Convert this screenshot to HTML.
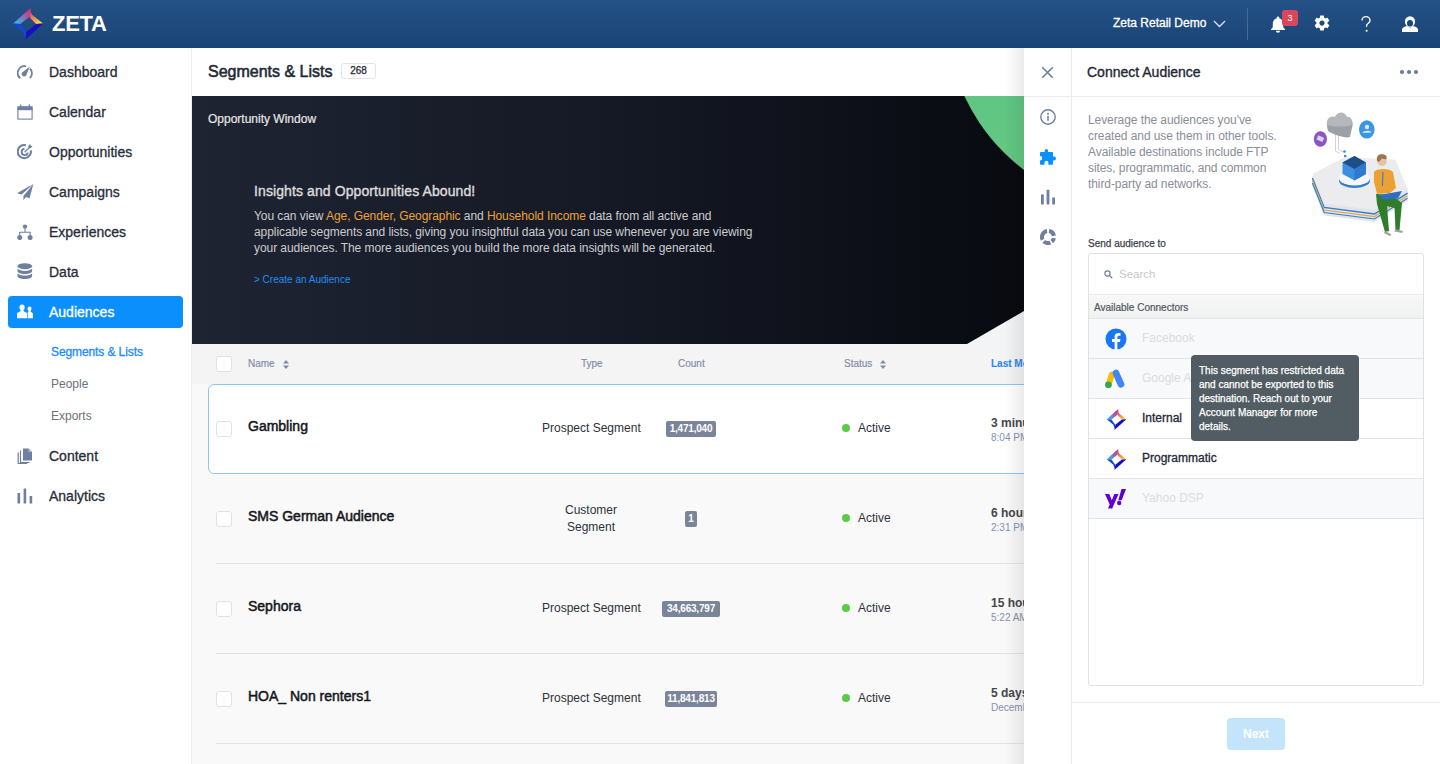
<!DOCTYPE html>
<html><head><meta charset="utf-8">
<style>
*{box-sizing:border-box;margin:0;padding:0}
html,body{width:1440px;height:764px;overflow:hidden;font-family:"Liberation Sans",sans-serif;background:#fff;position:relative}
.a{position:absolute;white-space:nowrap}
#top{left:0;top:0;width:1440px;height:48px;background:linear-gradient(#245186,#1a4477)}
#side{left:0;top:48px;width:192px;height:716px;background:#fff;border-right:1px solid #eceef1}
.nv{position:absolute;left:8px;width:175px;height:32px;border-radius:4px}
.nv span{position:absolute;left:41px;top:8px;font-size:14px;line-height:16px;color:#272d3b;-webkit-text-stroke:0.3px #272d3b}
.nv svg{position:absolute;left:9px;top:8px}
.nv.act{background:#0a8ffc}
.nv.act span{color:#fff;-webkit-text-stroke:0.3px #fff}
.sub{position:absolute;left:51px;font-size:12px;line-height:14px;color:#6b7079}
#main{left:192px;top:48px;width:832px;height:716px;background:#f9f9f9}
.cb{position:absolute;left:216px;width:16px;height:16px;border:1px solid #dfe1e4;border-radius:3px;background:#fff}
.th{position:absolute;top:358px;font-size:10px;line-height:12px;color:#7d8aa8;-webkit-text-stroke:0.15px #7d8aa8;white-space:nowrap}
.rn{position:absolute;left:248px;font-size:14px;line-height:16px;color:#15171c;-webkit-text-stroke:0.5px #15171c;white-space:nowrap}
.ty{position:absolute;left:542px;font-size:12px;line-height:14px;color:#2e323a;white-space:nowrap}
.bd{position:absolute;height:16px;border-radius:2px;background:#7a8599;color:#fff;font-size:10px;line-height:16px;font-weight:700;text-align:center;letter-spacing:-0.2px}
.dot{position:absolute;left:842px;width:8px;height:8px;border-radius:50%;background:#5acb44}
.st{position:absolute;left:858px;font-size:12px;line-height:14px;color:#2e323a;white-space:nowrap}
.lm{position:absolute;margin-top:-2px;left:991px;font-size:12px;line-height:14px;font-weight:700;color:#45474c;white-space:nowrap}
.lt{position:absolute;left:991px;font-size:10px;line-height:12px;color:#8491ad;white-space:nowrap}
.cr{position:absolute;left:0;width:336px;height:40px;border-top:1px solid #e3e4e6}
.cn{position:absolute;left:53px;font-size:12px;line-height:14px;white-space:nowrap}
#rp{left:1024px;top:48px;width:416px;height:716px;background:#fff}
</style></head><body>
<!-- TOP BAR -->
<div id="top" class="a">
  <svg width="0" height="0" style="position:absolute"><defs>
      <linearGradient id="lg1" x1="13" y1="23" x2="30" y2="8" gradientUnits="userSpaceOnUse"><stop offset="0" stop-color="#23c4f5"/><stop offset="1" stop-color="#e8207a"/></linearGradient>
      <linearGradient id="lg2" x1="30" y1="8" x2="43" y2="23" gradientUnits="userSpaceOnUse"><stop offset="0" stop-color="#e8207a"/><stop offset="1" stop-color="#f8ec3a"/></linearGradient>
      <g id="zlogo">
    <path d="M13.2 23.6 L30.4 8 L29.9 16.4 L20.2 23.9Z" fill="url(#lg1)"/>
    <path d="M30.4 8 Q30.8 13 32 14.8 L43.1 23.6 L36.1 23.9 L30.6 18.6 L29.9 16.4Z" fill="url(#lg2)"/>
    <path d="M43.1 23.6 L25.2 39.8 L26.2 32.1 L36.1 23.9Z" fill="#1a0fbf"/>
    <path d="M13.2 23.6 L20.2 23.9 L26.2 32.1 L25.2 39.8 Q24.6 35 23.2 32Z" fill="#1447d6"/>
      </g></defs></svg>
  <svg class="a" style="left:0;top:0" width="50" height="48" viewBox="0 0 50 48"><use href="#zlogo"/></svg>
  <div class="a" style="left:52px;top:12px;font-size:22px;line-height:24px;font-weight:700;color:#fff;letter-spacing:-0.3px">ZETA</div>
  <div class="a" style="left:1113px;top:16px;font-size:12px;line-height:15px;color:#fff;-webkit-text-stroke:0.3px #fff">Zeta Retail Demo</div>
  <svg class="a" style="left:1213px;top:20px" width="13" height="8" viewBox="0 0 13 8"><path d="M1 1 L6.5 6.5 L12 1" fill="none" stroke="#dfe6f0" stroke-width="1.3"/></svg>
  <div class="a" style="left:1247px;top:8px;width:1px;height:32px;background:#4a6a96"></div>
  <!-- bell -->
  <svg class="a" style="left:1269px;top:15px" width="18" height="18" viewBox="0 0 18 18"><path d="M9 1.5c-.8 0-1.3.6-1.3 1.3v.5C5.3 3.9 3.8 6 3.8 8.6v3.6L2 14.2v.9h14v-.9l-1.8-2V8.6c0-2.6-1.5-4.7-3.9-5.3v-.5c0-.7-.5-1.3-1.3-1.3z M7 15.8a2 2 0 0 0 4 0z" fill="#fff"/></svg>
  <div class="a" style="left:1282px;top:10px;width:16px;height:16px;border-radius:3px;background:#d9475c;color:#fff;font-size:9px;line-height:16px;text-align:center">3</div>
  <!-- gear -->
  <svg class="a" style="left:1313px;top:14px" width="18" height="18" viewBox="0 0 24 24"><path fill="#fff" d="M19.4 13c.04-.33.06-.66.06-1s-.02-.67-.06-1l2.1-1.65c.2-.15.24-.42.12-.64l-2-3.46c-.12-.22-.39-.3-.61-.22l-2.49 1c-.52-.4-1.08-.73-1.69-.98l-.38-2.65C14.46 2.18 14.25 2 14 2h-4c-.25 0-.46.18-.49.42l-.38 2.65c-.61.25-1.17.59-1.69.98l-2.49-1c-.23-.09-.49 0-.61.22l-2 3.46c-.13.22-.07.49.12.64L4.57 11c-.04.33-.07.66-.07 1s.03.67.07 1l-2.11 1.65c-.19.15-.24.42-.12.64l2 3.46c.12.22.39.3.61.22l2.49-1c.52.4 1.08.73 1.69.98l.38 2.65c.03.24.24.42.49.42h4c.25 0 .46-.18.49-.42l.38-2.65c.61-.25 1.17-.59 1.69-.98l2.49 1c.23.09.49 0 .61-.22l2-3.46c.12-.22.07-.49-.12-.64L19.4 13zM12 15.5c-1.93 0-3.5-1.57-3.5-3.5s1.57-3.5 3.5-3.5 3.5 1.57 3.5 3.5-1.57 3.5-3.5 3.5z"/></svg>
  <!-- help -->
  <svg class="a" style="left:1358px;top:15px" width="16" height="18" viewBox="0 0 16 18"><path d="M4 5.5C4 3.3 5.8 1.6 8 1.6s4 1.7 4 3.8c0 1.6-1 2.4-2 3.1-.9.6-1.4 1.1-1.4 2.3v1" fill="none" stroke="#fff" stroke-width="1.4"/><circle cx="8.6" cy="15.8" r="1" fill="#fff"/></svg>
  <!-- user -->
  <svg class="a" style="left:1401px;top:15px" width="18" height="18" viewBox="0 0 18 18"><ellipse cx="9" cy="6.6" rx="5.1" ry="5.4" fill="#fff"/><ellipse cx="9" cy="8.2" rx="3" ry="3.3" fill="#1c4879"/><path d="M1 17V14.6C1 12.6 3.6 11.4 6.2 11 7 11.9 8 12.3 9 12.3S11 11.9 11.8 11C14.4 11.4 17 12.6 17 14.6V17Z" fill="#fff"/></svg>
</div>
<!-- SIDEBAR -->
<div id="side" class="a"></div>
<div class="nv" style="top:56px"><svg style="left:9px;top:9px" width="16" height="14" viewBox="0 0 16 14"><path d="M3.2 13.2A6.8 6.8 0 0 1 9.2 1.4M13 3.5a6.8 6.8 0 0 1-.2 9.7" fill="none" stroke="#6f7fa0" stroke-width="1.8"/><path d="M12.8 1.6 L9.3 10.3 A2.5 2.5 0 1 1 5.2 7.4Z" fill="#6f7fa0"/></svg><span>Dashboard</span></div>
<div class="nv" style="top:96px"><svg style="left:9px;top:8px" width="16" height="16" viewBox="0 0 16 16"><rect x="0.9" y="4" width="14.2" height="11.1" fill="none" stroke="#6f7fa0" stroke-width="1.1"/><rect x="0.4" y="2.2" width="15.2" height="4" fill="#6f7fa0"/><rect x="3" y="0.5" width="1.3" height="2.5" fill="#6f7fa0"/><rect x="11.7" y="0.5" width="1.3" height="2.5" fill="#6f7fa0"/></svg><span>Calendar</span></div>
<div class="nv" style="top:136px"><svg style="left:9px;top:7px" width="16" height="17" viewBox="0 0 16 17"><path d="M13.8 7.4A6.6 6.6 0 1 1 8.9 2.2" fill="none" stroke="#6f7fa0" stroke-width="2.1"/><path d="M10.8 9.6A3.1 3.1 0 1 1 7.6 5.9" fill="none" stroke="#6f7fa0" stroke-width="1.9"/><path d="M7.6 9.3 L13.5 3.4" stroke="#6f7fa0" stroke-width="1.3"/><path d="M11.3 3 L13.2 0.8 L13.6 2.8 L15.6 3.2 L13.6 5.3 L11.6 5Z" fill="#6f7fa0"/></svg><span>Opportunities</span></div>
<div class="nv" style="top:176px"><svg style="left:9px;top:8px" width="17" height="17" viewBox="0 0 17 17"><path d="M16.4 0 L0 9.2 L4.6 10.5 L16.4 0 L6.4 12 L6.4 16.2 L9 12.9 L12.5 14.2Z" fill="#6f7fa0"/></svg><span>Campaigns</span></div>
<div class="nv" style="top:216px"><svg style="left:9px;top:8px" width="16" height="16" viewBox="0 0 16 16"><circle cx="8" cy="2.6" r="2.2" fill="#6f7fa0"/><circle cx="2.7" cy="13.6" r="2.5" fill="#6f7fa0"/><circle cx="13.1" cy="13.6" r="2.5" fill="#6f7fa0"/><path d="M8 4.5V8M2.7 11V8.2H13.1V11" fill="none" stroke="#6f7fa0" stroke-width="1.1"/></svg><span>Experiences</span></div>
<div class="nv" style="top:256px"><svg style="left:9px;top:7px" width="16" height="17" viewBox="0 0 16 17"><ellipse cx="7.8" cy="3.2" rx="7.3" ry="3" fill="#6f7fa0"/><path d="M0.5 5.5v2.6c0 1.7 3.3 3 7.3 3s7.3-1.3 7.3-3V5.5c-1 1.5-4 2.4-7.3 2.4S1.5 7 .5 5.5z" fill="#6f7fa0"/><path d="M0.5 10.2v2.8c0 1.7 3.3 3 7.3 3s7.3-1.3 7.3-3v-2.8c-1 1.5-4 2.4-7.3 2.4S1.5 11.7.5 10.2z" fill="#6f7fa0"/></svg><span>Data</span></div>
<div class="nv act" style="top:296px"><svg style="left:9px;top:8px" width="17" height="15" viewBox="0 0 17 15"><path d="M5 0.6c-1.6 0-2.6 1.2-2.6 2.8 0 1.1.4 2 1.1 2.6v1.2L0.1 8.9V14.3H10.2V8.9L6.6 7.2V6c.7-.6 1.1-1.5 1.1-2.6C7.7 1.8 6.6.6 5 .6z" fill="#fff"/><path d="M12.6 2.6c-1.2 0-2 .9-2 2.2 0 .8.3 1.5.8 2v.9l-.6.3 0 6.3H15.9V9.2L13.7 7.8v-1c.5-.5.8-1.2.8-2 0-1.3-.8-2.2-1.9-2.2z" fill="#fff"/></svg><span>Audiences</span></div>
<div class="sub" style="top:345px;color:#1a8cff;-webkit-text-stroke:0.3px #1a8cff;letter-spacing:-0.1px">Segments &amp; Lists</div>
<div class="sub" style="top:377px">People</div>
<div class="sub" style="top:409px">Exports</div>
<div class="nv" style="top:440px"><svg style="left:9px;top:8px" width="16" height="16" viewBox="0 0 16 16"><path d="M6 0.5h5.5L15 4v8.5H6z" fill="#6f7fa0"/><path d="M11.5 0.5V4H15" fill="#a9b5cb"/><path d="M3.5 2.5v12h9" fill="none" stroke="#6f7fa0" stroke-width="1.2"/><path d="M1.2 4.5v11h9" fill="none" stroke="#6f7fa0" stroke-width="1.2"/></svg><span>Content</span></div>
<div class="nv" style="top:480px"><svg style="left:9px;top:8px" width="16" height="16" viewBox="0 0 16 16"><rect x="0.5" y="5" width="2.6" height="10.5" fill="#6f7fa0"/><rect x="6.6" y="0.5" width="2.6" height="15" fill="#6f7fa0"/><rect x="12.6" y="8" width="2.6" height="7.5" fill="#6f7fa0"/></svg><span>Analytics</span></div>
<!-- MAIN -->
<div id="main" class="a"></div>
<div class="a" style="left:192px;top:48px;width:832px;height:48px;background:#fff"></div>
<div class="a" style="left:208px;top:62.5px;font-size:16px;line-height:18px;color:#232936;-webkit-text-stroke:0.55px #232936">Segments &amp; Lists</div>
<div class="a" style="left:341px;top:63px;width:35px;height:16px;border:1px solid #e3e4e7;border-radius:3px;background:#fff;font-size:10px;line-height:14px;text-align:center;color:#2a2f3a;-webkit-text-stroke:0.3px #2a2f3a">268</div>
<!-- banner -->
<div class="a" style="left:192px;top:96px;width:832px;height:248px;overflow:hidden;background:linear-gradient(90deg,#1f2433 0%,#151925 50%,#080a10 100%)">
  <div class="a" style="left:754px;top:-280px;width:394px;height:394px;border-radius:50%;background:linear-gradient(160deg,#52c093,#6acb78)"></div>
  <svg class="a" style="left:0;top:0" width="832" height="248"><path d="M775 248 L832 215 L832 248Z" fill="#f2f4f6"/></svg>
  <div class="a" style="left:16px;top:16px;font-size:12px;line-height:14px;color:#e6e6e6;-webkit-text-stroke:0.2px #e6e6e6">Opportunity Window</div>
  <div class="a" style="left:62px;top:87px;font-size:14px;line-height:16px;color:#d9dadb;-webkit-text-stroke:0.4px #d9dadb;letter-spacing:0.1px">Insights and Opportunities Abound!</div>
  <div class="a" style="left:62px;top:112px;font-size:12px;line-height:16px;color:#cbccce;letter-spacing:-0.07px">You can view <span style="color:#eba23a">Age, Gender, Geographic</span> and <span style="color:#eba23a">Household Income</span> data from all active and<br>applicable segments and lists, giving you insightful data you can use whenever you are viewing<br>your audiences. The more audiences you build the more data insights will be generated.</div>
  <div class="a" style="left:62px;top:178px;font-size:10px;line-height:12px;color:#1c8ef5">&gt; Create an Audience</div>
</div>
<!-- table header -->
<div class="a" style="left:192px;top:344px;width:832px;height:40px;background:#f4f4f4"></div>
<div class="cb" style="top:356px"></div>
<div class="th" style="left:248px">Name</div>
<svg class="a" style="left:283px;top:360px" width="6" height="9" viewBox="0 0 6 9"><path d="M0 3.6L3 0 6 3.6zM0 5.4L3 9 6 5.4z" fill="#7d8aa8"/></svg>
<div class="th" style="left:581px">Type</div>
<div class="th" style="left:678px">Count</div>
<div class="th" style="left:844px">Status</div>
<svg class="a" style="left:880px;top:360px" width="6" height="9" viewBox="0 0 6 9"><path d="M0 3.6L3 0 6 3.6zM0 5.4L3 9 6 5.4z" fill="#7d8aa8"/></svg>
<div class="th" style="left:991px;color:#1a8cff;font-weight:700">Last Modified</div>
<!-- rows -->
<div class="a" style="left:208px;top:384px;width:840px;height:90px;background:#fff;border:1px solid #8fc5f4;border-radius:6px"></div>
<div class="cb" style="top:421px"></div>
<div class="rn" style="top:418px">Gambling</div>
<div class="ty" style="top:421px">Prospect Segment</div>
<div class="bd" style="left:666px;top:421px;width:50px">1,471,040</div>
<div class="dot" style="top:424px"></div><div class="st" style="top:421px">Active</div>
<div class="lm" style="top:418px">3 minutes ago</div><div class="lt" style="top:432px">8:04 PM</div>

<div class="cb" style="top:511px"></div>
<div class="rn" style="top:508px">SMS German Audience</div>
<div class="ty" style="top:502px;line-height:17px;text-align:center;width:60px;left:561px">Customer<br>Segment</div>
<div class="bd" style="left:685px;top:511px;width:12px">1</div>
<div class="dot" style="top:514px"></div><div class="st" style="top:511px">Active</div>
<div class="lm" style="top:508px">6 hours ago</div><div class="lt" style="top:522px">2:31 PM</div>
<div class="a" style="left:216px;top:563px;width:820px;height:1px;background:#e4e4e4"></div>

<div class="cb" style="top:601px"></div>
<div class="rn" style="top:598px">Sephora</div>
<div class="ty" style="top:601px">Prospect Segment</div>
<div class="bd" style="left:662px;top:601px;width:58px">34,663,797</div>
<div class="dot" style="top:604px"></div><div class="st" style="top:601px">Active</div>
<div class="lm" style="top:598px">15 hours ago</div><div class="lt" style="top:612px">5:22 AM</div>
<div class="a" style="left:216px;top:653px;width:820px;height:1px;background:#e4e4e4"></div>

<div class="cb" style="top:691px"></div>
<div class="rn" style="top:688px">HOA_ Non renters1</div>
<div class="ty" style="top:691px">Prospect Segment</div>
<div class="bd" style="left:665px;top:691px;width:52px">11,841,813</div>
<div class="dot" style="top:694px"></div><div class="st" style="top:691px">Active</div>
<div class="lm" style="top:688px">5 days ago</div><div class="lt" style="top:702px">December</div>
<div class="a" style="left:216px;top:743px;width:820px;height:1px;background:#e4e4e4"></div>
<!-- panel shadow -->
<div class="a" style="left:1004px;top:48px;width:20px;height:716px;background:linear-gradient(90deg,rgba(0,0,0,0),rgba(0,0,0,0.08))"></div>
<!-- RIGHT PANEL -->
<div id="rp" class="a"></div>
<div class="a" style="left:1071px;top:48px;width:1px;height:716px;background:#e8ebef"></div>
<div class="a" style="left:1024px;top:96px;width:416px;height:1px;background:#e8ebef"></div>
<svg class="a" style="left:1041px;top:66px" width="13" height="13" viewBox="0 0 13 13"><path d="M1.2 1.2L11.8 11.8M11.8 1.2L1.2 11.8" stroke="#6a7a9a" stroke-width="1.5"/></svg>
<div class="a" style="left:1087px;top:64px;font-size:14px;line-height:16px;color:#232936;-webkit-text-stroke:0.35px #232936">Connect Audience</div>
<svg class="a" style="left:1399px;top:69px" width="20" height="6" viewBox="0 0 20 6"><circle cx="3" cy="3" r="2.1" fill="#6a7a9a"/><circle cx="10" cy="3" r="2.1" fill="#6a7a9a"/><circle cx="17" cy="3" r="2.1" fill="#6a7a9a"/></svg>
<!-- rail icons -->
<svg class="a" style="left:1040px;top:109px" width="16" height="16" viewBox="0 0 16 16"><circle cx="8" cy="8" r="7.2" fill="none" stroke="#6f7fa0" stroke-width="1.4"/><circle cx="8" cy="4.8" r="1" fill="#6f7fa0"/><rect x="7.25" y="6.8" width="1.5" height="5" fill="#6f7fa0"/></svg>
<svg class="a" style="left:1040px;top:149px" width="16" height="16" viewBox="0 0 16 16"><path d="M1 3H4.7V1.7A1.7 1.7 0 0 1 8.1 1.7V3H12A1 1 0 0 1 13 4V7.5H14A2 2 0 0 1 14 11.5H13V14.8A1 1 0 0 1 12 15.8H8.4V13.8A1.95 1.95 0 0 0 4.5 13.8V15.8H1A1 1 0 0 1 0 14.8V11.4A2.2 2.2 0 0 0 0 7V4A1 1 0 0 1 1 3Z" fill="#0a8ffc"/></svg>
<svg class="a" style="left:1040px;top:189px" width="16" height="16" viewBox="0 0 16 16"><rect x="1" y="5.5" width="2.8" height="10" fill="#6f7fa0"/><rect x="6.6" y="0.8" width="2.8" height="14.7" fill="#6f7fa0"/><rect x="12.2" y="8.5" width="2.8" height="7" fill="#6f7fa0"/></svg>
<svg class="a" style="left:1040px;top:229px" width="16" height="16" viewBox="0 0 16 16"><path d="M9.04 2.09A6 6 0 0 1 13.91 6.96M13.91 9.04A6 6 0 0 1 11.86 12.60M10.34 13.52A6 6 0 0 1 3.83 12.32M2.65 10.72A6 6 0 0 1 7.06 2.07" fill="none" stroke="#6f7fa0" stroke-width="4"/></svg>
<!-- description -->
<div class="a" style="left:1088px;top:112px;font-size:12px;line-height:16px;color:#8a8e96;letter-spacing:-0.08px">Leverage the audiences you've<br>created and use them in other tools.<br>Available destinations include FTP<br>sites, programmatic, and common<br>third-party ad networks.</div>
<!-- illustration -->
<svg class="a" style="left:1290px;top:100px" width="140" height="145" viewBox="0 0 140 145">
  <path d="M22.4 76 L22.4 86 L34.1 115.5 L84.4 122 L117.6 101 L117.6 89.2Z" fill="#e4e4e6"/>
  <path d="M22.4 78 L34.1 107.4 L84.4 114 L117.6 93.2" fill="none" stroke="#2f7fd6" stroke-width="1.4"/>
  <path d="M22.4 80.5 L34.1 110 L84.4 116.6 L117.6 95.8" fill="none" stroke="#e8a63a" stroke-width="1.2"/>
  <path d="M22.4 83 L34.1 112.5 L84.4 119 L117.6 98.3" fill="none" stroke="#2f7fd6" stroke-width="1.1"/>
  <path d="M22.4 74 L55 56.9 L105.3 59.8 L117.6 89.2 L84.4 110 L34.1 103.4Z" fill="#ececee"/>
  <ellipse cx="64.5" cy="80.5" rx="15.5" ry="7.5" fill="#2f7fd6"/>
  <ellipse cx="64.5" cy="78" rx="15.5" ry="7.5" fill="#f6f6f8"/>
  <path d="M52.5 62.5 L64.5 56 L76 62.5 L76 74 L64.5 80.5 L52.5 74Z" fill="#3b8ee0"/>
  <path d="M52.5 62.5 L64.5 56 L76 62.5 L64.5 69Z" fill="#1c4f86"/>
  <path d="M64.5 69 L76 62.5 L76 74 L64.5 80.5Z" fill="#2d7ad0"/>
  <path d="M45.5 33 L45.5 51 L50 53.5" fill="none" stroke="#c8c8cc" stroke-width="0.8"/>
  <path d="M48.5 33 L48.5 49.5 L53 52" fill="none" stroke="#c8c8cc" stroke-width="0.8"/>
  <circle cx="54.5" cy="51.5" r="1.3" fill="#2f8ae0"/><circle cx="55.2" cy="56" r="1.3" fill="#2f8ae0"/>
  <path d="M37 26 C36 19 41 16 45 18 C47 12 55 12 57 18 C62 17 64 23 62 28 L60 37 C56 39 42 34 38 31Z" fill="#9da0a6"/><path d="M37 25 C36 18 41 15 45 17 C47 11 55 11 57 17 C61 16 63 21 61.5 25 C55 27 44 27 37 25Z" fill="#b4b7bc"/>
  <ellipse cx="30.4" cy="39" rx="6.6" ry="7.8" fill="#8b55c4"/>
  <rect x="27" y="36.5" width="6.5" height="4.5" fill="#dcd0ee" transform="rotate(25 30.4 39)"/>
  <ellipse cx="76.8" cy="29.4" rx="7.8" ry="9.2" fill="#3b96e6"/>
  <circle cx="77" cy="27" r="2.2" fill="#d6eafa"/><path d="M72.5 33 C73 30 81 30 81.5 32.5 Z" fill="#d6eafa"/>
  <path d="M86 94 L101 95 L112 103 L109.5 130 L105.5 130 L104.5 108 L97 106 L99 131 L95 132 L87 104Z" fill="#2e7d2c"/>
  <path d="M84 72 C86 68 100 68 103 72 L106 88 L100 93 L87 94 L84 82Z" fill="#eba233"/>
  <path d="M93 72 L92.4 86" stroke="#2f7fd6" stroke-width="1.1"/>
  <path d="M89 95 L112 91 L108 98.6 L93 99.6Z" fill="#2e6fc2"/>
  <circle cx="92" cy="61.5" r="4.6" fill="#e6c3a3"/>
  <path d="M87 61 C86 55 90 53.5 94 54.5 C97 55.5 97.5 58 96 59.5 L92 58.5 L89 62Z" fill="#9b7453"/>
  <path d="M95 131 L101.5 134.5 L100 136 L94 133Z" fill="#9aa0a8"/><path d="M105 129 L113 131 L112 133 L104.5 131.5Z" fill="#9aa0a8"/>
</svg>
<div class="a" style="left:1088px;top:238px;font-size:10px;line-height:12px;color:#3d424c;-webkit-text-stroke:0.25px #3d424c">Send audience to</div>
<!-- list box -->
<div class="a" style="left:1088px;top:253px;width:336px;height:433px;border:1px solid #e0e1e4;border-radius:3px;background:#fff;overflow:hidden">
  <svg class="a" style="left:15px;top:16px" width="9" height="9" viewBox="0 0 9 9"><circle cx="3.5" cy="3.5" r="2.6" fill="none" stroke="#6a7a9a" stroke-width="1.1"/><path d="M5.4 5.4L8.2 8.2" stroke="#6a7a9a" stroke-width="1.3"/></svg>
  <div class="a" style="left:30px;top:13px;font-size:11.5px;line-height:14px;color:#c6c7ca">Search</div>
  <div class="a" style="left:0;top:40px;width:336px;height:25px;background:linear-gradient(#f8f8f8,#f0f1f1);border-top:1px solid #ececee"></div>
  <div class="a" style="left:5px;top:48px;font-size:10px;line-height:12px;color:#4f585e;-webkit-text-stroke:0.2px #4f585e">Available Connectors</div>
  <div class="cr" style="top:64px;background:#f8f9fb"></div>
  <div class="cr" style="top:104px;background:#f8f9fb"></div>
  <div class="cr" style="top:144px;background:#fff"></div>
  <div class="cr" style="top:184px;background:#fff"></div>
  <div class="cr" style="top:224px;background:#f8f9fb;height:41px;border-bottom:1px solid #e3e4e6"></div>
  <!-- facebook -->
  <svg class="a" style="left:15.5px;top:74px" width="22" height="22" viewBox="0 0 22 22"><circle cx="11" cy="11" r="10.5" fill="#1877f2"/><path d="M12.4 22V14h2.6l.4-3h-3V9.2c0-.9.3-1.5 1.6-1.5h1.5V5c-.3 0-1.2-.1-2.2-.1-2.2 0-3.7 1.3-3.7 3.8V11H7v3h2.6v8z" fill="#fff"/></svg>
  <div class="cn" style="top:77px;color:#dcdcde">Facebook</div>
  <!-- google ads -->
  <svg class="a" style="left:15px;top:115px" width="22" height="20" viewBox="0 0 22 20"><path d="M7.9 5.5 L4.6 15.5" stroke="#fbbc04" stroke-width="6" stroke-linecap="round"/><path d="M12 4.1 L17 15.3" stroke="#4285f4" stroke-width="6.7" stroke-linecap="round"/><circle cx="4.4" cy="15.8" r="3.4" fill="#34a853"/></svg>
  <div class="cn" style="top:117px;color:#dcdcde">Google Ads</div>
  <!-- internal -->
  <svg class="a" style="left:17px;top:155px" width="21" height="21" viewBox="13 8 30 32"><use href="#zlogo"/></svg>
  <div class="cn" style="top:157px;color:#232936;-webkit-text-stroke:0.3px #232936">Internal</div>
  <svg class="a" style="left:17px;top:195px" width="21" height="21" viewBox="13 8 30 32"><use href="#zlogo"/></svg>
  <div class="cn" style="top:197px;color:#232936;-webkit-text-stroke:0.3px #232936">Programmatic</div>
  <!-- yahoo -->
  <svg class="a" style="left:16px;top:235px" width="22" height="20" viewBox="0 0 22 20"><path d="M0 5h4.3l2.5 6.3L9.3 5h4.2L7.2 19.5H3l1.7-3.9z" fill="#6001d2"/><circle cx="14.2" cy="14" r="2.2" fill="#6001d2"/><path d="M16.5 0h4.5l-4.3 11.3h-3.4z" fill="#6001d2"/></svg>
  <div class="cn" style="top:237px;color:#dcdcde">Yahoo DSP</div>
</div>
<!-- tooltip -->
<div class="a" style="left:1191px;top:355px;width:168px;height:86px;background:#515d62;border-radius:4px"></div>
<div class="a" style="left:1199px;top:364px;font-size:10px;line-height:14px;color:#fff;-webkit-text-stroke:0.25px #fff">This segment has restricted data<br>and cannot be exported to this<br>destination. Reach out to your<br>Account Manager for more<br>details.</div>
<!-- footer -->
<div class="a" style="left:1072px;top:702px;width:368px;height:1px;background:#e8ebef"></div>
<div class="a" style="left:1227px;top:718px;width:58px;height:32px;border-radius:4px;background:#c3e4fb;color:#fff;font-size:12px;line-height:32px;font-weight:700;text-align:center">Next</div>
</body></html>
